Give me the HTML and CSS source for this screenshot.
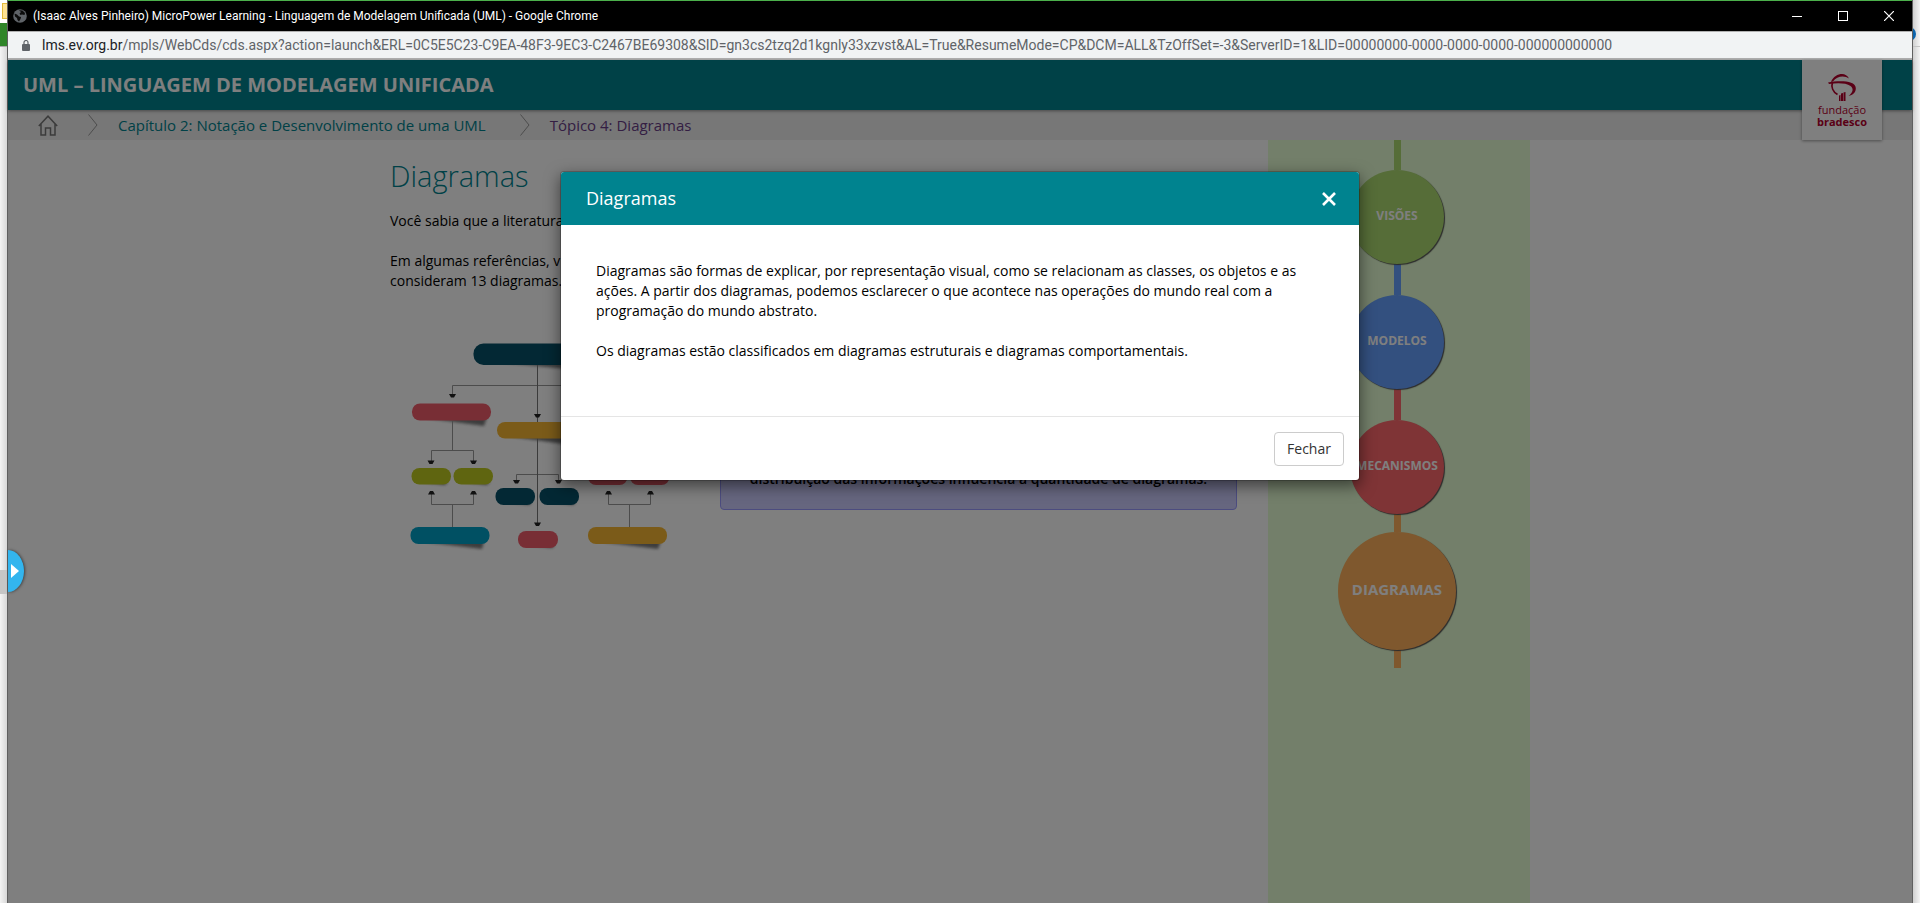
FILE: index.html
```html
<!DOCTYPE html>
<html lang="pt-BR">
<head>
<meta charset="utf-8">
<title>Linguagem de Modelagem Unificada (UML)</title>
<link rel="stylesheet" href="styles.css">
</head>
<body>
<div class="desktop">
  <div class="edge edge-left">
    <svg width="7" height="600" viewBox="0 0 7 600" aria-hidden="true">
      <rect width="7" height="23" fill="#fff"/>
      <rect x="2.5" y="3.500" width="8" height="15" fill="#fde293" stroke="#e2b93b"/>
      <rect y="23" width="7" height="23" fill="#2f8528"/>
      <rect y="46" width="7" height="1" fill="#aaa"/>
      <rect y="570" width="7" height="24" fill="#c6c6c6"/>
    </svg>
  </div>
  <div class="window">
    <header class="titlebar">
      <svg class="globe" width="14" height="14" viewBox="0 0 14 14" aria-hidden="true">
        <circle cx="7" cy="7" r="6.800" fill="#5f6368"/>
        <path d="M1.500 4.500 L4 5.500 6 7.500 8 8 7.500 10 6 12.500 4.500 11 4 9 2 7.500Z M6 1.200 L9.500 1.500 12 4 11.500 6 9 5.500 7.500 6 6.500 4.500 8 3Z" fill="#0b0b0b"/>
      </svg>
      <span class="window-title">(Isaac Alves Pinheiro) MicroPower Learning - Linguagem de Modelagem Unificada (UML) - Google Chrome</span>
      <div class="controls">
        <button class="control" aria-label="Minimizar"><svg width="10" height="10"><path d="M0 5.500H10" stroke="#fff"/></svg></button>
        <button class="control" aria-label="Maximizar"><svg width="10" height="10"><rect x=".5" y=".5" width="9" height="9" fill="none" stroke="#fff"/></svg></button>
        <button class="control" aria-label="Fechar janela"><svg width="10" height="10"><path d="M0 0L10 10M10 0L0 10" stroke="#fff" stroke-width="1.200"/></svg></button>
      </div>
    </header>
    <div class="addressbar">
      <svg class="lock" width="8" height="11" viewBox="0 0 8 11" aria-hidden="true">
        <rect y="4" width="8" height="7" rx="1" fill="#5f6368"/>
        <path d="M2 4.500V2.500a2 2 0 0 1 4 0V4.500" fill="none" stroke="#5f6368" stroke-width="1.200"/>
      </svg>
      <span class="url"><span class="host">lms.ev.org.br</span>/mpls/WebCds/cds.aspx?action=launch&amp;ERL=0C5E5C23-C9EA-48F3-9EC3-C2467BE69308&amp;SID=gn3cs2tzq2d1kgnly33xzvst&amp;AL=True&amp;ResumeMode=CP&amp;DCM=ALL&amp;TzOffSet=-3&amp;ServerID=1&amp;LID=00000000-0000-0000-0000-000000000000</span>
    </div>
    <div class="page">
      <div class="course-header"><h1 class="course-title">UML – LINGUAGEM DE MODELAGEM UNIFICADA</h1></div>
      <nav class="breadcrumb">
        <a class="home" href="#" aria-label="Início">
          <svg width="20" height="21" viewBox="0 0 20 21" fill="none" stroke="#777" stroke-width="1.500"><path d="M.8 11L10 1.200 19.200 11M3 9V20H7.500V13H12.500V20H17V9"/></svg>
        </a>
        <svg class="chevron" width="10" height="22" viewBox="0 0 10 22" fill="none" stroke="#999"><path d="M.5.5L9 11 .5 21.500"/></svg>
        <a class="crumb" href="#">Capítulo 2: Notação e Desenvolvimento de uma UML</a>
        <svg class="chevron" width="10" height="22" viewBox="0 0 10 22" fill="none" stroke="#999"><path d="M.5.5L9 11 .5 21.500"/></svg>
        <a class="crumb visited" href="#">Tópico 4: Diagramas</a>
      </nav>
      <div class="brand">
        <svg width="28" height="28" viewBox="0 0 28 28" aria-hidden="true">
          <path d="M3 8C5 2.500 10 0 14 0C17 0 19.500 1.500 21 4.500C17 1.500 9 1.500 5 7.500Z" fill="#b5002c"/>
          <path d="M0 8.500C10 6.500 27.500 6 27.800 14C28 18.500 25 21 20.500 22C25 18.500 26 14.500 22.500 12C18 8.800 9 9 1 10Z" fill="#b5002c"/>
          <path d="M4.500 8C3 13 5 18 9.500 20.500" fill="none" stroke="#b5002c" stroke-width="1.800"/>
          <path d="M11 27V21.500L12.500 21V27ZM13 27V19.500L15 19V27ZM15.500 27V18.500L17.500 18V27Z" fill="#b5002c"/>
        </svg>
        <span class="brand-top">fundação</span>
        <span class="brand-bottom">bradesco</span>
      </div>
      <main class="container">
        <article class="lesson">
          <h2 class="lesson-title">Diagramas</h2>
          <p class="text">Você sabia que a literatura</p>
          <p class="text">Em algumas referências, v<br>consideram 13 diagramas.</p>
          <div class="figure-row">
            <svg class="chart" width="280" height="220" viewBox="400 335 280 220" role="img" aria-label="Hierarquia de diagramas">
              <defs>
                <filter id="soft" x="-20%" y="-60%" width="140%" height="260%"><feGaussianBlur stdDeviation="1.500"/></filter>
              </defs>
              <g fill="#222" opacity=".6" filter="url(#soft)">
                <path d="M495 362L640 364V376Z"/>
                <path d="M425 418L487 417 484 426Z"/>
                <path d="M507 436L575 436 570 445Z"/>
                <path d="M424 542L484 541 482 549Z"/>
                <path d="M602 542L661 541 658 549Z"/>
                <path d="M420 482H448L445 485ZM462 482H490L487 485ZM505 502H532L529 505ZM549 502H576L573 505ZM528 545H555L552 548Z"/>
              </g>
              <g fill="none" stroke="#999">
                <path d="M452.500 397V385.500H640M452.500 420V450.500M431.500 462V450.500H473.500V462"/>
                <path d="M431.500 492V504.500H473.500V492M452.500 504.500V528M516.500 482V474.500H558.500V482"/>
                <path d="M608.500 492V504.500H650.500V492M629.500 504.500V528"/>
                <path d="M537.500 360V525" stroke="#777"/>
              </g>
              <g fill="#222">
                <path d="M449 394H456L454 397.500H451ZM534 414H541L539 417.500H536ZM427.500 460.500H434.500L432.500 464H429.500ZM470 460.500H477L475 464H472ZM513 480H520L518 483.500H515ZM555 480H562L560 483.500H557ZM534 522.500H541L539 526H536Z"/>
                <path d="M428 494.500H435L433 491H430ZM470 494.500H477L475 491H472ZM605 494.500H612L610 491H607ZM647 494.500H654L652 491H649Z"/>
              </g>
              <rect x="473.500" y="343.500" width="130" height="21.500" rx="10" fill="#065068"/>
              <rect x="412" y="403.500" width="79" height="17" rx="8" fill="#f15c6b"/>
              <rect x="497" y="422" width="80" height="16.500" rx="8" fill="#f7b733"/>
              <rect x="411.500" y="468" width="39.500" height="16.500" rx="8" fill="#bfca20"/>
              <rect x="453.500" y="468" width="39.500" height="16.500" rx="8" fill="#bfca20"/>
              <rect x="495.500" y="488" width="39.500" height="17" rx="8" fill="#065068"/>
              <rect x="539.500" y="488" width="39.500" height="17" rx="8" fill="#065068"/>
              <rect x="588" y="468" width="39.500" height="17" rx="8" fill="#f15c6b"/>
              <rect x="630" y="468" width="39.500" height="17" rx="8" fill="#f15c6b"/>
              <rect x="410.500" y="527" width="79" height="17" rx="8" fill="#00a0c6"/>
              <rect x="518" y="531" width="40" height="17" rx="8" fill="#f15c6b"/>
              <rect x="588" y="527" width="79" height="17" rx="8" fill="#f7b733"/>
            </svg>
            <div class="note">distribuição das informações influencia a quantidade de diagramas.</div>
          </div>
        </article>
        <aside class="track">
          <div class="link green"></div>
          <a class="node green" href="#">VISÕES</a>
          <div class="link blue"></div>
          <a class="node blue" href="#">MODELOS</a>
          <div class="link red"></div>
          <a class="node red" href="#">MECANISMOS</a>
          <div class="link short orange"></div>
          <a class="node current orange" href="#">DIAGRAMAS</a>
          <div class="link short orange"></div>
        </aside>
      </main>
      <div class="overlay">
        <section class="modal" role="dialog" aria-labelledby="modal-title">
          <header class="modal-header">
            <h3 class="modal-title" id="modal-title">Diagramas</h3>
            <button class="close" aria-label="Fechar diálogo"><svg width="14" height="14"><path d="M1 1L13 13M13 1L1 13" stroke="#fff" stroke-width="2.600"/></svg></button>
          </header>
          <div class="modal-body">
            <p class="text">Diagramas são formas de explicar, por representação visual, como se relacionam as classes, os objetos e as ações. A partir dos diagramas, podemos esclarecer o que acontece nas operações do mundo real com a programação do mundo abstrato.</p>
            <p class="text">Os diagramas estão classificados em diagramas estruturais e diagramas comportamentais.</p>
          </div>
          <footer class="modal-footer"><button class="button">Fechar</button></footer>
        </section>
      </div>
      <button class="drawer" aria-label="Abrir menu"><svg width="8" height="14"><path d="M0 0L8 7 0 14Z" fill="#fff"/></svg></button>
    </div>
  </div>
  <div class="edge edge-right">
    <svg width="7" height="50" viewBox="0 0 7 50" aria-hidden="true">
      <circle cx="-4" cy="34" r="7" fill="#0a64ad"/>
      <rect y="46" width="7" height="1" fill="#c4c4c4"/>
    </svg>
  </div>
</div>
</body>
</html>
```
FILE: styles.css
```css
* { box-sizing: border-box; }
body { margin: 0; font-family: "Open Sans", "Noto Sans", sans-serif; font-size: 14px; line-height: 20px; color: #000; }
h1, h2, h3, p { margin: 0; }
a { text-decoration: none; }
button { font: inherit; border: 0; padding: 0; cursor: pointer; }
svg { display: block; flex: none; }

.desktop { display: flex; min-height: 100vh; background: #000; }
.edge { width: 8px; flex: none; background: linear-gradient(90deg, #f4f4f4, #d8d8d8); }
.edge-left { border-right: 1px solid #606060; }
.edge-right { border-left: 1px solid #606060; background: linear-gradient(90deg, #d0d0d0, #f4f4f4); }
.window { flex: 1; min-width: 0; display: flex; flex-direction: column; border-top: 1px solid #4bb04b; }

.titlebar { display: flex; align-items: center; height: 30px; padding-left: 5px; background: #000; color: #fff; font-family: Roboto, sans-serif; font-size: 12px; }
.window-title { flex: 1; padding-left: 6px; white-space: nowrap; }
.controls { display: flex; }
.control { display: flex; align-items: center; justify-content: center; width: 46px; height: 30px; background: none; }
.addressbar { display: flex; align-items: center; height: 29px; padding-left: 14px; background: #f1f3f4; border-top: 1px solid #b0b0b0; border-bottom: 2px solid #b0b0b0; color: #5f6368; font-family: Roboto, sans-serif; }
.url { padding-left: 12px; white-space: nowrap; overflow: hidden; }
.host { color: #202124; }

.page { position: relative; flex: 1; display: flex; flex-direction: column; background: #fff; }
.course-header { display: flex; align-items: center; height: 50px; padding: 0 15px; background: #00838f; box-shadow: 0 1px 3px rgba(0, 0, 0, .4); z-index: 1; }
.course-title { font-size: 20px; line-height: 28px; font-weight: 700; color: #fff; }
.breadcrumb { display: flex; align-items: center; height: 30px; padding-left: 30px; background: #eee; font-size: 15px; }
.home { padding-right: 30px; }
.crumb { padding: 0 34px 0 20px; color: #00838f; }
.visited { color: #683d87; }
.brand { position: absolute; z-index: 1; top: 0; right: 30px; width: 80px; height: 80px; display: flex; flex-direction: column; align-items: center; padding-top: 14px; background: #fff; box-shadow: 0 1px 3px rgba(0, 0, 0, .4); color: #b5002c; font-size: 11px; line-height: 12px; }
.brand-top { padding-top: 2px; }
.brand-bottom { font-weight: 700; }

.container { flex: 1; display: flex; width: 100%; max-width: 1140px; margin: 0 auto; }
.lesson { flex: 1; padding: 16px 31px 0 0; }
.lesson-title { margin-bottom: 15px; font-size: 29px; line-height: 40px; font-weight: 300; color: #00838f; }
.text { margin-bottom: 20px; }
.figure-row { display: flex; gap: 40px; padding: 24px 0 0 10px; }
.note { align-self: flex-start; flex: 1; margin-top: 35px; padding: 98px 16px 20px; border: 1px solid #99f; border-radius: 4px; background: #ccf; font-weight: 600; text-align: center; white-space: nowrap; }
.track { width: 262px; flex: none; display: flex; flex-direction: column; align-items: center; padding-right: 4px; background: #e6ffd4; }
.link { width: 7px; height: 31px; }
.link:first-child { height: 30px; }
.link.short { height: 18px; }
.node { display: flex; align-items: center; justify-content: center; width: 94px; height: 94px; padding-bottom: 2px; border-radius: 50%; box-shadow: 1px 1px 1px #555; color: #fff; font-size: 12px; font-weight: 700; z-index: 0; }
.current { width: 118px; height: 118px; padding-bottom: 4px; font-size: 15px; }
.green { background: #acda70; }
.blue { background: #66a0fe; }
.red { background: #ff686c; }
.orange { background: #ffb05c; }

.overlay { position: absolute; inset: 0; z-index: 2; padding-top: 111px; background: rgba(0, 0, 0, .5); }
.modal { max-width: 800px; margin: 0 auto; border: 1px solid rgba(0, 0, 0, .2); border-radius: 4px; background: #fff; background-clip: padding-box; box-shadow: 0 5px 15px rgba(0, 0, 0, .5); }
.modal-header { display: flex; align-items: center; justify-content: space-between; height: 53px; padding: 0 23px 0 25px; border-radius: 3px 3px 0 0; background: #00838f; }
.modal-title { padding-bottom: 2px; font-size: 18px; line-height: 24px; font-weight: 400; color: #fff; }
.close { background: none; }
.modal-body { min-height: 191px; padding: 36px 35px 30px; }
.modal-footer { display: flex; justify-content: flex-end; padding: 15px 15px 14px; border-top: 1px solid #e5e5e5; }
.button { width: 70px; height: 34px; border: 1px solid #ccc; border-radius: 4px; background: #fff; color: #333; }
.drawer { position: absolute; z-index: 3; top: 490px; left: 0; width: 16px; height: 42px; padding-left: 3px; border-radius: 0 16px 16px 0 / 0 21px 21px 0; background: #33b5ee; box-shadow: 1px 0 3px rgba(0, 0, 0, .5); }
```
